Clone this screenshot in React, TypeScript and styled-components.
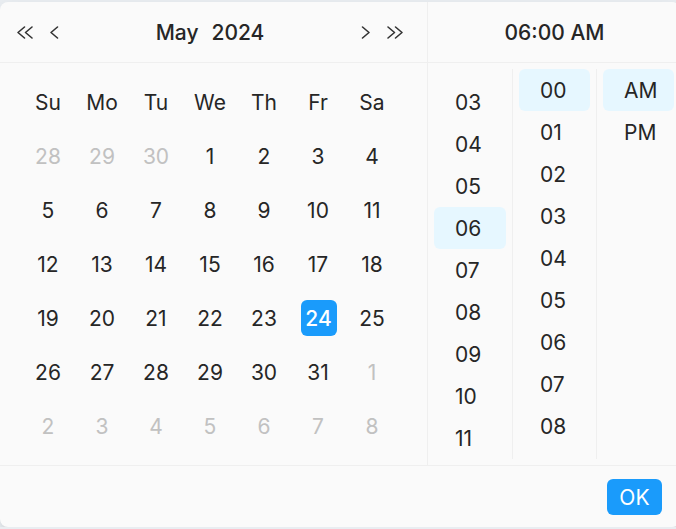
import React, { useLayoutEffect, useRef } from 'react';
import styled, { createGlobalStyle } from 'styled-components';

const GlobalStyle = createGlobalStyle`
  html, body {
    margin: 0;
    padding: 0;
    overflow: hidden;
    background: #e9edf1;
  }
  body {
    font-family: Inter, "Liberation Sans", Arial, sans-serif;
  }
`;

const Panel = styled.div`
  margin-top: 2px;
  width: 680px;
  background: #fafafa;
  border-radius: 8px;
  box-shadow: 0 6px 16px rgba(0, 0, 0, 0.08), 0 3px 6px -4px rgba(0, 0, 0, 0.12);
  overflow: hidden;
  color: #262626;
  font-size: 21px;
`;

const PanelRow = styled.div`
  display: flex;
`;

const DatePanel = styled.div`
  width: 427px;
  flex-shrink: 0;
`;

const Header = styled.div`
  height: 60px;
  border-bottom: 1px solid #efefef;
  display: flex;
  align-items: center;
  padding: 0 19px 0 12px;
`;

const NavGroup = styled.div`
  display: flex;
  gap: 6px;
`;

const NavButton = styled.button`
  width: 24px;
  height: 24px;
  padding: 0;
  border: none;
  background: none;
  color: #333;
  display: flex;
  align-items: center;
  justify-content: center;
  cursor: pointer;
`;

const HeaderView = styled.div`
  flex: 1;
  display: flex;
  justify-content: center;
  gap: 13px;
  font-weight: 500;
`;

const DateBody = styled.div`
  padding: 12px 27px 12px 21px;
`;

const DayGrid = styled.div`
  display: grid;
  grid-template-columns: repeat(7, 54px);
  grid-auto-rows: 54px;
`;

const WeekDay = styled.div`
  display: flex;
  align-items: center;
  justify-content: center;
`;

const DayCell = styled.div<{ $muted: boolean }>`
  display: flex;
  align-items: center;
  justify-content: center;
  color: ${p => (p.$muted ? '#c1c1c1' : '#262626')};
`;

const DayInner = styled.div<{ $selected: boolean }>`
  min-width: 36px;
  height: 36px;
  margin-left: ${p => (p.$selected ? '1px' : '0')};
  border-radius: 6px;
  display: flex;
  align-items: center;
  justify-content: center;
  background: ${p => (p.$selected ? '#1a9bfb' : 'transparent')};
  color: ${p => (p.$selected ? '#fff' : 'inherit')};
  font-weight: ${p => (p.$selected ? 500 : 400)};
`;

const TimePanel = styled.div`
  width: 253px;
  flex-shrink: 0;
  border-left: 1px solid #efefef;
`;

const TimeHeader = styled.div`
  height: 60px;
  border-bottom: 1px solid #efefef;
  display: flex;
  align-items: center;
  justify-content: center;
  font-weight: 500;
`;

const TimeBody = styled.div`
  display: flex;
  padding: 6px 0;
`;

const TimeColumn = styled.div<{ $first?: boolean }>`
  box-sizing: border-box;
  width: 84px;
  height: 390px;
  overflow: hidden;
  border-left: ${p => (p.$first ? 'none' : '1px solid #efefef')};
`;

const TimeCell = styled.div<{ $active: boolean }>`
  height: 42px;
  margin: 0 6px;
  padding-left: 21px;
  display: flex;
  align-items: center;
  border-radius: 6px;
  background: ${p => (p.$active ? '#e6f7ff' : 'transparent')};
`;

const Footer = styled.div`
  border-top: 1px solid #efefef;
  display: flex;
  justify-content: flex-end;
  padding: 13px 18px 12px;
`;

const OkButton = styled.button`
  height: 36px;
  padding: 0 12.5px;
  border: none;
  border-radius: 6px;
  background: #1a9bfb;
  color: #fff;
  font-family: inherit;
  font-size: 21px;
  cursor: pointer;
`;

const Chevron = ({ dir, double }: { dir: 'left' | 'right'; double?: boolean }) => {
  const left = double
    ? ['12.5,7 6,12.5 12.5,18', '20,7 13.5,12.5 20,18']
    : ['15.5,7 9,12.5 15.5,18'];
  const pts = dir === 'left'
    ? left
    : left.map(s =>
        s
          .split(' ')
          .map(pt => {
            const [x, y] = pt.split(',').map(Number);
            return `${24 - x},${y}`;
          })
          .join(' ')
      );
  return (
    <svg width="24" height="24" viewBox="0 0 24 24" fill="none" stroke="currentColor" strokeWidth="1.6" strokeLinecap="round" strokeLinejoin="round">
      {pts.map(p => (
        <polyline key={p} points={p} />
      ))}
    </svg>
  );
};

interface ColumnProps {
  items: string[];
  active: string;
  scrollEnd?: boolean;
  first?: boolean;
}

// a scrolling list of the time picker; the hours list sits scrolled to its end
const Column: React.FC<ColumnProps> = ({ items, active, scrollEnd, first }) => {
  const ref = useRef<HTMLDivElement>(null);
  useLayoutEffect(() => {
    const el = ref.current;
    if (el && scrollEnd) el.scrollTop = el.scrollHeight - el.clientHeight;
  }, [scrollEnd]);
  return (
    <TimeColumn ref={ref} $first={first}>
      {items.map(v => (
        <TimeCell key={v} $active={v === active}>
          {v}
        </TimeCell>
      ))}
    </TimeColumn>
  );
};

const pad = (n: number) => String(n).padStart(2, '0');

const weekDays = ['Su', 'Mo', 'Tu', 'We', 'Th', 'Fr', 'Sa'];

// May 2024 starts on Wednesday; show 6 weeks from Apr 28
const days: { d: number; muted: boolean }[] = [];
for (let i = 0; i < 42; i++) {
  if (i < 3) days.push({ d: 28 + i, muted: true });
  else if (i < 34) days.push({ d: i - 2, muted: false });
  else days.push({ d: i - 33, muted: true });
}

const hours = Array.from({ length: 12 }, (_, i) => pad(i));
const minutes = Array.from({ length: 60 }, (_, i) => pad(i));

export default function App() {
  return (
    <>
      <GlobalStyle />
      <Panel>
        <PanelRow>
          <DatePanel>
            <Header>
              <NavGroup>
                <NavButton><Chevron dir="left" double /></NavButton>
                <NavButton><Chevron dir="left" /></NavButton>
              </NavGroup>
              <HeaderView>
                <span>May</span>
                <span>2024</span>
              </HeaderView>
              <NavGroup>
                <NavButton><Chevron dir="right" /></NavButton>
                <NavButton><Chevron dir="right" double /></NavButton>
              </NavGroup>
            </Header>
            <DateBody>
              <DayGrid>
                {weekDays.map(w => (
                  <WeekDay key={w}>{w}</WeekDay>
                ))}
                {days.map((c, i) => (
                  <DayCell key={i} $muted={c.muted}>
                    <DayInner $selected={!c.muted && c.d === 24}>{c.d}</DayInner>
                  </DayCell>
                ))}
              </DayGrid>
            </DateBody>
          </DatePanel>
          <TimePanel>
            <TimeHeader>06:00 AM</TimeHeader>
            <TimeBody>
              <Column items={hours} active="06" scrollEnd first />
              <Column items={minutes} active="00" />
              <Column items={['AM', 'PM']} active="AM" />
            </TimeBody>
          </TimePanel>
        </PanelRow>
        <Footer>
          <OkButton>OK</OkButton>
        </Footer>
      </Panel>
    </>
  );
}
